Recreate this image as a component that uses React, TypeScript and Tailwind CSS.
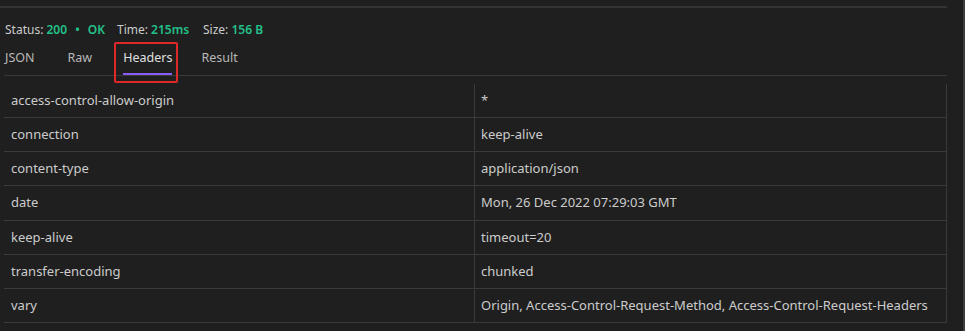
const headers: [string, string][] = [
  ["access-control-allow-origin", "*"],
  ["connection", "keep-alive"],
  ["content-type", "application/json"],
  ["date", "Mon, 26 Dec 2022 07:29:03 GMT"],
  ["keep-alive", "timeout=20"],
  ["transfer-encoding", "chunked"],
  ["vary", "Origin, Access-Control-Request-Method, Access-Control-Request-Headers"],
];

const tabs = [
  { label: "JSON", gap: "mr-[33px]" },
  { label: "Raw", gap: "mr-[31px]" },
  { label: "Headers", gap: "mr-[29px]" },
  { label: "Result", gap: "" },
];

export default function App() {
  return (
    <div
      className="w-[965px] h-[331px] bg-[#1f1f1f] flex overflow-hidden text-[13px] text-[#cccccc]"
      style={{ fontFamily: '"Noto Sans", "Open Sans", sans-serif' }}
    >
      <div className="w-[947px] pt-[6px] flex flex-col">
        {/* top divider */}
        <div className="h-[2px] bg-[#333333]" />

        {/* status line */}
        <div className="flex items-center pl-[5px] mt-[13px] h-[18px] text-[12px]">
          <span className="w-[112px]">
            Status: <span className="font-semibold text-[#23c189]">200 <span className="mx-[5px]">•</span> OK</span>
          </span>
          <span className="w-[86px]">
            Time: <span className="font-semibold text-[#23c189]">215ms</span>
          </span>
          <span>
            Size: <span className="font-semibold text-[#23c189]">156 B</span>
          </span>
        </div>

        {/* tabs */}
        <div className="relative mt-[9px] ml-[4px] h-[28px] border-b border-[#383838] flex items-start pl-[1px] text-[12.5px]">
          {tabs.map((t) => (
            <div key={t.label} className={`relative h-full pt-[1px] ${t.gap}`}>
              <span className={t.label === "Headers" ? "text-[#e0e0e0]" : "text-[#b8b8b8]"}>{t.label}</span>
              {t.label === "Headers" && (
                <div className="absolute left-0 right-0 bottom-[0px] h-[2px] bg-[#8a5cf5]" />
              )}
            </div>
          ))}
          {/* annotation box */}
          <div className="absolute left-[110px] top-[-6px] w-[64px] h-[41px] border-2 border-[#e0282a] rounded-[2px]" />
        </div>

        {/* headers table */}
        <div className="mt-[8px] ml-[4px] border-r border-[#3a3a3a]">
          {headers.map(([k, v]) => (
            <div
              key={k}
              className={`${k === "date" ? "h-[35px]" : "h-[34px]"} border-b border-[#3a3a3a] flex items-center`}
            >
              <div className="w-[471px] h-full flex items-center pl-[7px] border-r border-[#3a3a3a]">{k}</div>
              <div className="flex-1 pl-[6px]">{v}</div>
            </div>
          ))}
        </div>
      </div>
      <div className="flex-1" />
      <div className="w-[2px] bg-[#3d3d3d]" />
    </div>
  );
}
